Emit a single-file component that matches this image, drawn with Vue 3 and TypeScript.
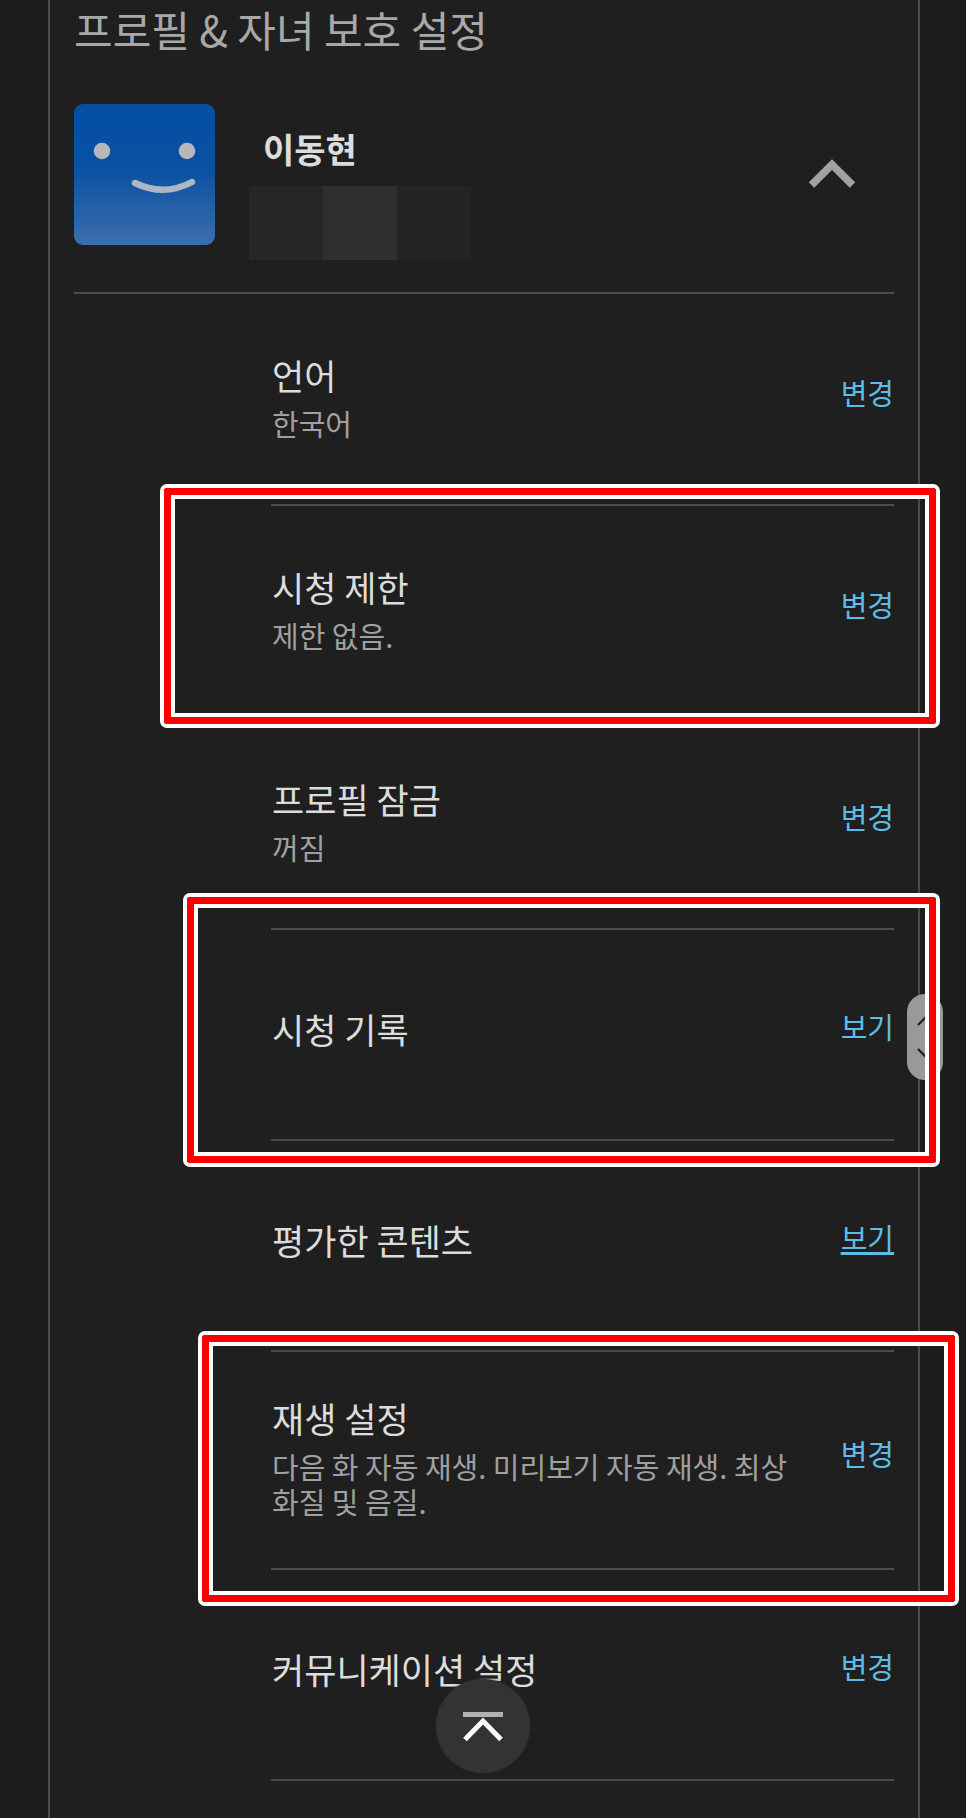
<script setup lang="ts">
import { ref } from 'vue'

interface Setting {
  id: string
  title: string
  detail?: string
  action: string
  underlined?: boolean
  mark?: string
}

const settings: Setting[] = [
  { id: 'language', title: '언어', detail: '한국어', action: '변경' },
  { id: 'restriction', title: '시청 제한', detail: '제한 없음.', action: '변경', mark: 'mark-restriction' },
  { id: 'lock', title: '프로필 잠금', detail: '꺼짐', action: '변경' },
  { id: 'history', title: '시청 기록', action: '보기', mark: 'mark-history' },
  { id: 'ratings', title: '평가한 콘텐츠', action: '보기', underlined: true },
  {
    id: 'playback',
    title: '재생 설정',
    detail: '다음 화 자동 재생. 미리보기 자동 재생. 최상 화질 및 음질.',
    action: '변경',
    mark: 'mark-playback',
  },
  { id: 'communication', title: '커뮤니케이션 설정', action: '변경' },
]

const open = ref(true)

function toTop(): void {
  window.scrollTo({ top: 0, behavior: 'smooth' })
}
</script>

<template>
  <div class="page">
    <main class="panel">
      <h1 class="heading">프로필 &amp; 자녀 보호 설정</h1>

      <header class="profile">
        <svg class="avatar" viewBox="0 0 141 141" aria-hidden="true">
          <defs>
            <linearGradient id="face" x1="0" y1="0" x2="0" y2="1">
              <stop offset="0" stop-color="#044fa4" />
              <stop offset="0.45" stop-color="#0950a2" />
              <stop offset="1" stop-color="#3c6fab" />
            </linearGradient>
          </defs>
          <rect width="141" height="141" rx="9" fill="url(#face)" />
          <circle cx="28" cy="47" r="8.3" fill="#b5b7b8" />
          <circle cx="113" cy="47" r="8.3" fill="#b5b7b8" />
          <path d="M61 79 Q90 93 118 78" fill="none" stroke="#adb8c3" stroke-width="6.4" stroke-linecap="round" />
        </svg>
        <div class="identity">
          <h2 class="name">이동현</h2>
          <div class="mosaic" aria-hidden="true"><span></span><span></span><span></span></div>
        </div>
        <button class="toggle" type="button" aria-label="프로필 접기" :aria-expanded="open" @click="open = !open">
          <svg viewBox="0 0 48 30" width="48" height="30" aria-hidden="true">
            <path d="M3.500 26 L24 5.500 L44.500 26" fill="none" stroke="#a2a2a2" stroke-width="7.600" />
          </svg>
        </button>
      </header>

      <ul v-if="open" class="settings">
        <li v-for="item in settings" :key="item.id" class="row">
          <div class="text">
            <h3 class="title">{{ item.title }}</h3>
            <p v-if="item.detail" class="detail">{{ item.detail }}</p>
          </div>
          <a :href="'#' + item.id" class="action" :class="{ underlined: item.underlined }">{{ item.action }}</a>
          <span v-if="item.mark" class="mark" :class="item.mark" aria-hidden="true"></span>
        </li>
      </ul>
    </main>

    <div class="handle" aria-hidden="true">
      <svg viewBox="0 0 36 86" width="36" height="86">
        <path d="M11 31 L19 23 L27 31 M11 55 L19 63 L27 55" fill="none" stroke="#222" stroke-width="2.400" />
      </svg>
    </div>

    <button class="to-top" type="button" aria-label="맨 위로" @click="toTop">
      <svg viewBox="0 0 94 94" width="94" height="94" aria-hidden="true">
        <path d="M27 35.500 H67" stroke="#b0b0b0" stroke-width="5" />
        <path d="M29 60.500 L47 42 L65 60.500" fill="none" stroke="#fff" stroke-width="5" />
      </svg>
    </button>
  </div>
</template>

<style>
body {
  margin: 0;
  background: #1d1d1d;
}
</style>

<style scoped>
.page {
  position: relative;
  box-sizing: border-box;
  min-height: 100vh;
  padding: 0 46px 0 48px;
  overflow: hidden;
  background: #1d1d1d;
  color: #dcdcdc;
  font-family: "Noto Sans CJK KR", sans-serif;
}

.panel {
  box-sizing: border-box;
  min-height: 100vh;
  padding: 0 24px;
  border: solid #4a4a4a;
  border-width: 0 2px;
  background: #1f1f1f;
}

h1,
h2,
h3,
p,
ul {
  margin: 0;
  padding: 0;
}

.heading {
  padding-bottom: 46px;
  color: #a8a8a8;
  font-size: 42px;
  font-weight: 400;
  line-height: 58px;
}

.profile {
  display: flex;
  align-items: flex-start;
  padding-bottom: 32px;
  border-bottom: 2px solid #4a4a4a;
}

.avatar {
  flex: none;
  width: 141px;
  height: 141px;
  padding-bottom: 15px;
}

.identity {
  flex: 1;
  padding: 22px 0 0 34px;
}

.name {
  padding-left: 14px;
  font-size: 34px;
  font-weight: 700;
  line-height: 46px;
}

.mosaic {
  display: flex;
  margin-top: 14px;
}

.mosaic span {
  width: 74px;
  height: 74px;
  background: #262626;
}

.mosaic span:nth-child(2) {
  background: #2f2f2f;
}

.mosaic span:nth-child(3) {
  background: #242424;
}

.toggle {
  display: flex;
  margin: 55px 38px 0 0;
  padding: 0;
  border: 0;
  background: none;
}

.settings {
  padding-left: 197px;
  list-style: none;
}

.row {
  position: relative;
  display: flex;
  align-items: center;
  justify-content: space-between;
  gap: 40px;
  box-sizing: border-box;
  min-height: 211px;
  padding: 40px 0 52px;
  border-bottom: 2px solid #4a4a4a;
}

.row:has(.detail) {
  min-height: 212px;
  padding: 41px 0 49px;
}

.text {
  padding-left: 1px;
}

.title {
  font-size: 35px;
  font-weight: 400;
  line-height: 50px;
}

.detail {
  margin-top: 6px;
  color: #a0a0a0;
  font-size: 29px;
  font-weight: 400;
  line-height: 35px;
}

.action {
  flex: none;
  padding-bottom: 6px;
  color: #5ebde6;
  font-size: 29px;
  line-height: 40px;
  text-decoration: none;
}

.underlined {
  text-decoration: underline;
  text-decoration-thickness: 3px;
  text-decoration-skip-ink: none;
  text-underline-offset: 2px;
}

/* Red callout frames laid over the rows they point out */
.mark {
  position: absolute;
  z-index: 2;
  box-sizing: border-box;
  border: 4px solid #fff;
  border-radius: 7px;
  pointer-events: none;
}

.mark::before {
  position: absolute;
  inset: 0;
  border: 7px solid #fb0000;
  border-radius: 3px;
  content: "";
}

.mark::after {
  position: absolute;
  inset: 7px;
  border: 4px solid #fff;
  content: "";
}

.mark-restriction {
  inset: -22px -46px -12px -111px;
}

.mark-history {
  inset: -37px -46px -28px -88px;
}

.mark-playback {
  inset: -21px -65px -38px -73px;
}

.handle {
  position: absolute;
  z-index: 1;
  top: 994px;
  right: 23px;
  width: 36px;
  height: 86px;
  border-radius: 18px;
  background: #999;
}

.to-top {
  position: absolute;
  bottom: 45px;
  left: 50%;
  width: 94px;
  height: 94px;
  margin-left: -47px;
  padding: 0;
  border: 0;
  border-radius: 50%;
  background: #333;
  box-shadow: 0 0 3px #2a2a2a;
}

.to-top svg {
  display: block;
}
</style>
